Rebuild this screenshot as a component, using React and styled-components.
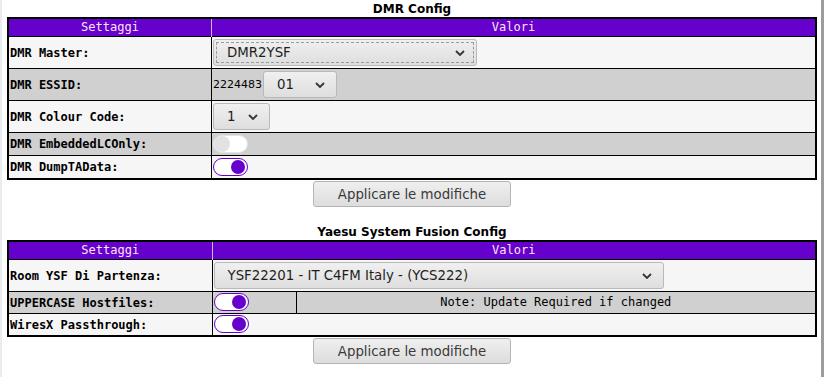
import React from "react";
import styled, { createGlobalStyle } from "styled-components";

const GlobalStyle = createGlobalStyle`
  body {
    margin: 0;
    background: #ffffff;
    font-family: "DejaVu Sans", sans-serif;
  }
`;

const PURPLE = "#6600cc";

const Page = styled.div`
  box-sizing: border-box;
  width: 824px;
  min-height: 377px;
  border-left: 2px solid #e9edf2;
  border-right: 3px solid #9c9c9c;
  padding: 0 4px 0 5px;
`;

const Section = styled.section`
  margin-bottom: ${(p) => p.$gap || 0}px;
`;

const Title = styled.div`
  padding: 2px 0 1px;
  line-height: 14px;
  font-family: "DejaVu Sans", sans-serif;
  font-weight: bold;
  font-size: 12px;
  text-align: center;
  color: #000;
`;

const Table = styled.table`
  width: 810px;
  border-collapse: collapse;
  border: 2px solid #000;
  table-layout: fixed;
`;

const Th = styled.th`
  background: ${PURPLE};
  color: #ffe4f4;
  font-family: "DejaVu Sans Mono", monospace;
  font-weight: normal;
  font-size: 12px;
  line-height: 15px;
  padding: 1px 0;
  border: 1px solid #c8b8e0;
  border-top: none;
  border-bottom: none;
  text-align: center;
`;

const Tr = styled.tr`
  background: ${(p) => (p.$alt ? "#d0d0d0" : "#f6f6f6")};
`;

const Label = styled.td`
  width: 202px;
  padding: 2px 1px;
  border: 1px solid #000;
  font-family: "DejaVu Sans Mono", monospace;
  font-weight: bold;
  font-size: 12px;
  color: #000;
  white-space: nowrap;
`;

const Value = styled.td`
  padding: ${(p) => (p.$tight ? "1px 1px 2px" : "2px 1px")};
  border: 1px solid #000;
  font-family: "DejaVu Sans", sans-serif;
  font-size: 11px;
  color: #000;
  text-align: ${(p) => (p.$center ? "center" : "left")};
`;

const Note = styled.span`
  font-family: "DejaVu Sans Mono", monospace;
  font-size: 12px;
`;

const Inline = styled.div`
  display: flex;
  align-items: center;
  gap: 1px;
`;

const SelectBox = styled.div`
  box-sizing: border-box;
  display: flex;
  align-items: center;
  justify-content: space-between;
  width: ${(p) => p.$w}px;
  height: 27px;
  padding: 0 11px 0 13px;
  border: 1px solid #b9b9b9;
  border-radius: 3px;
  background: linear-gradient(#f0f0f0, #dedede);
  font-family: "DejaVu Sans", sans-serif;
  font-size: 13.33px;
  color: #1e1e1e;
  ${(p) =>
    p.$focused &&
    `outline: 1px dashed #9a9a9a; outline-offset: -4px;`}
`;

const Chevron = () => (
  <svg width="10" height="6" viewBox="0 0 10 6">
    <path d="M1 1 L5 5 L9 1" fill="none" stroke="#333" strokeWidth="1.8" />
  </svg>
);

const Select = ({ w, value, focused }) => (
  <SelectBox $w={w} $focused={focused}>
    <span>{value}</span>
    <Chevron />
  </SelectBox>
);

const Track = styled.div`
  box-sizing: border-box;
  width: 35px;
  height: 18px;
  border-radius: 9px;
  border: 1px solid ${(p) => (p.$on ? PURPLE : "#e4e4e4")};
  background: #ffffff;
  display: flex;
  align-items: center;
  justify-content: ${(p) => (p.$on ? "flex-end" : "flex-start")};
  padding: 0 2px;
`;

const Knob = styled.div`
  width: ${(p) => (p.$on ? 14 : 16)}px;
  height: ${(p) => (p.$on ? 14 : 16)}px;
  border-radius: 50%;
  background: ${(p) => (p.$on ? PURPLE : "#e2e2e2")};
  margin-left: ${(p) => (p.$on ? 0 : -2)}px;
`;

const Toggle = ({ on }) => (
  <Track $on={on}>
    <Knob $on={on} />
  </Track>
);

const ButtonRow = styled.div`
  display: flex;
  justify-content: center;
  margin-top: 1px;
`;

const Button = styled.button`
  box-sizing: border-box;
  width: 198px;
  height: 26px;
  border: 1px solid #b4b4b4;
  border-radius: 3px;
  background: linear-gradient(#efefef, #dddddd);
  font-family: "DejaVu Sans", sans-serif;
  font-size: 13.33px;
  color: #3a3a3a;
  padding: 0;
`;

export default function App() {
  return (
    <>
      <GlobalStyle />
      <Page>
        <Section $gap={16}>
          <Title>DMR Config</Title>
          <Table>
            <thead>
              <tr>
                <Th style={{ width: 202 }}>Settaggi</Th>
                <Th>Valori</Th>
              </tr>
            </thead>
            <tbody>
              <Tr>
                <Label>DMR Master:</Label>
                <Value>
                  <Select w={264} value="DMR2YSF" focused />
                </Value>
              </Tr>
              <Tr $alt>
                <Label>DMR ESSID:</Label>
                <Value>
                  <Inline>
                    2224483
                    <Select w={74} value="01" />
                  </Inline>
                </Value>
              </Tr>
              <Tr>
                <Label>DMR Colour Code:</Label>
                <Value>
                  <Select w={57} value="1" />
                </Value>
              </Tr>
              <Tr $alt>
                <Label>DMR EmbeddedLCOnly:</Label>
                <Value>
                  <Toggle />
                </Value>
              </Tr>
              <Tr>
                <Label>DMR DumpTAData:</Label>
                <Value>
                  <Toggle on />
                </Value>
              </Tr>
            </tbody>
          </Table>
          <ButtonRow>
            <Button>Applicare le modifiche</Button>
          </ButtonRow>
        </Section>

        <Section>
          <Title>Yaesu System Fusion Config</Title>
          <Table>
            <colgroup>
              <col style={{ width: 204 }} />
              <col style={{ width: 84 }} />
              <col />
            </colgroup>
            <thead>
              <tr>
                <Th>Settaggi</Th>
                <Th colSpan={2}>Valori</Th>
              </tr>
            </thead>
            <tbody>
              <Tr>
                <Label>Room YSF Di Partenza:</Label>
                <Value colSpan={2}>
                  <Select w={450} value="YSF22201 - IT C4FM Italy - (YCS222)" />
                </Value>
              </Tr>
              <Tr $alt>
                <Label>UPPERCASE Hostfiles:</Label>
                <Value $tight>
                  <Toggle on />
                </Value>
                <Value $center $tight>
                  <Note>Note: Update Required if changed</Note>
                </Value>
              </Tr>
              <Tr>
                <Label>WiresX Passthrough:</Label>
                <Value colSpan={2} $tight>
                  <Toggle on />
                </Value>
              </Tr>
            </tbody>
          </Table>
          <ButtonRow>
            <Button>Applicare le modifiche</Button>
          </ButtonRow>
        </Section>
      </Page>
    </>
  );
}
